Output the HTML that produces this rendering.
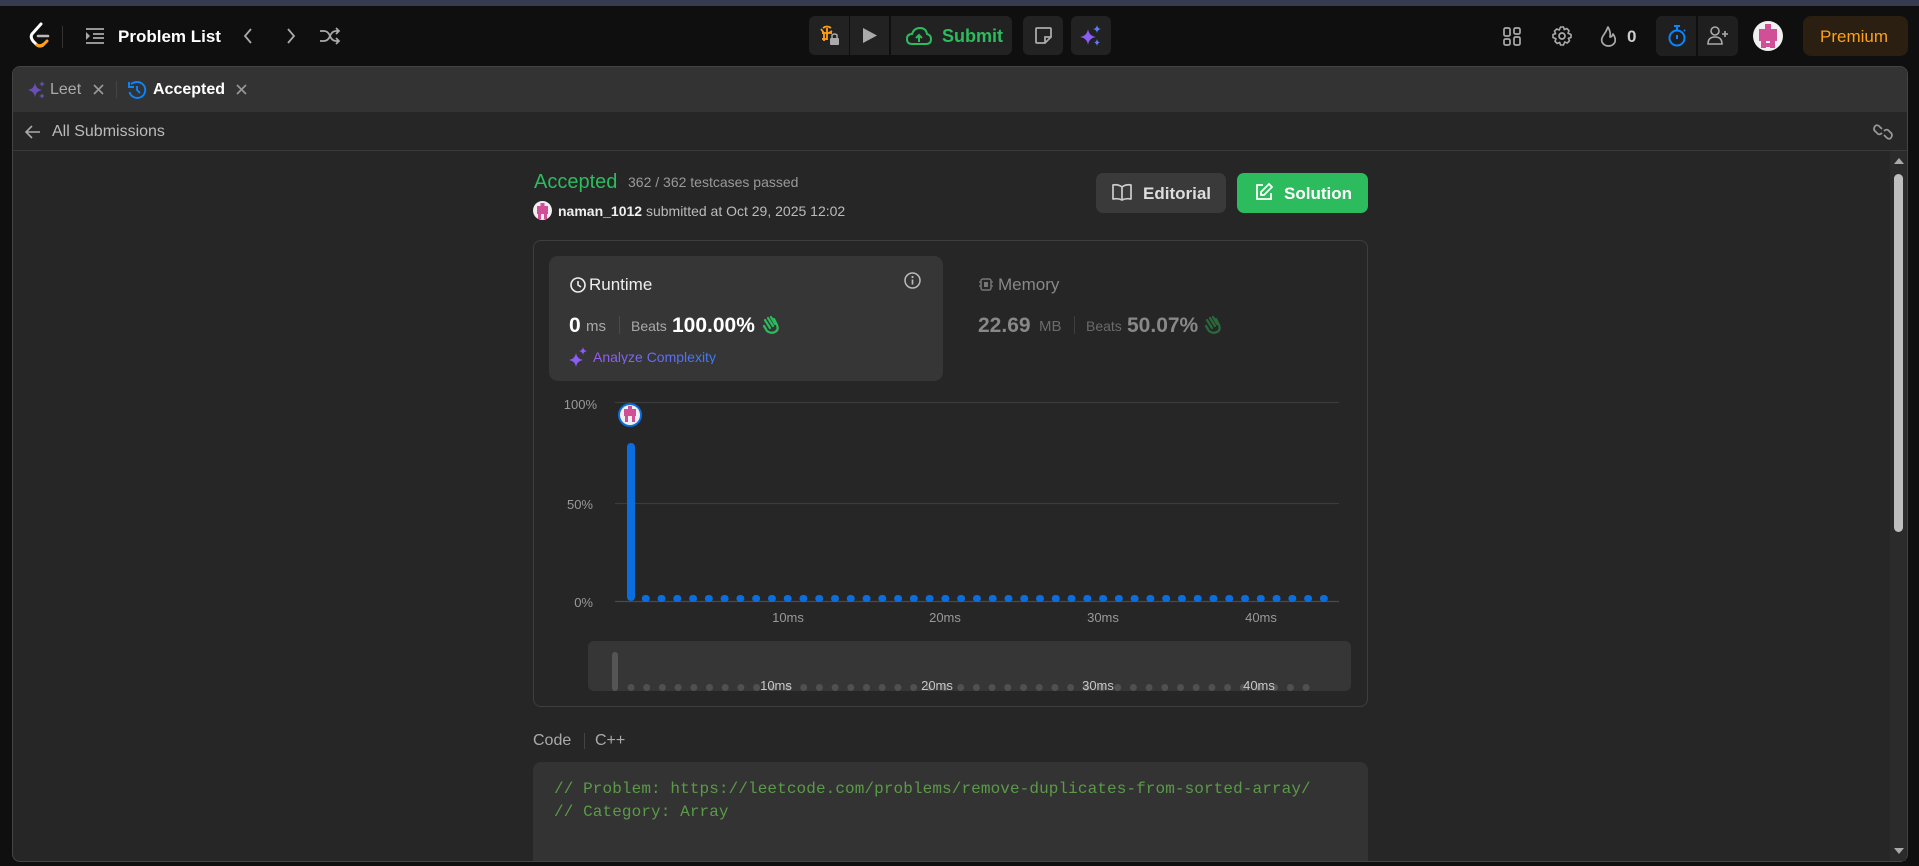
<!DOCTYPE html>
<html><head><meta charset="utf-8"><style>
*{margin:0;padding:0;box-sizing:border-box}
body{width:1919px;height:866px;background:#0f0f0f;font-family:"Liberation Sans",sans-serif;position:relative;overflow:hidden;color:#eee}
.a{position:absolute}
.btn{position:absolute;background:#222;border-radius:6px}
svg{position:absolute;overflow:visible}
.t{position:absolute;white-space:nowrap;line-height:1}
</style></head><body>
<div class="a" style="left:0;top:0;width:1919px;height:6px;background:#373b51"></div>

<svg style="left:29px;top:22px" width="22" height="26" viewBox="0 0 22 26"><path d="M12 2 L3 12 Q1 15 4 19 L8 23 Q11 25 14 23" fill="none" stroke="#fff" stroke-width="3" stroke-linecap="round"/><path d="M8 23 Q11 25 15 22 L18 19" fill="none" stroke="#ffa116" stroke-width="3" stroke-linecap="round"/><path d="M9 14 H19" stroke="#bbb" stroke-width="2.6" stroke-linecap="round"/></svg>
<div class="a" style="left:62px;top:26px;width:1px;height:22px;background:#333"></div>
<svg style="left:86px;top:28px" width="18" height="16"><path d="M0 1H18M7 6H18M7 10H18M0 15H18" stroke="#aaa" stroke-width="1.8"/><path d="M0 4L4 8L0 12Z" fill="#aaa"/></svg>
<div class="t" style="left:118px;top:28px;font-size:17px;font-weight:bold;color:#fff">Problem List</div>
<svg style="left:243px;top:28px" width="10" height="16"><path d="M8 1L2 8L8 15" fill="none" stroke="#aaa" stroke-width="1.8"/></svg>
<svg style="left:286px;top:28px" width="10" height="16"><path d="M2 1L8 8L2 15" fill="none" stroke="#aaa" stroke-width="1.8"/></svg>
<svg style="left:320px;top:28px" width="20" height="16"><path d="M0 3H4Q8 3 10 8Q12 13 16 13H19M0 13H4Q8 13 10 8Q12 3 16 3H19M16 0L19 3L16 6M16 10L19 13L16 16" fill="none" stroke="#aaa" stroke-width="1.7"/></svg>

<div class="btn" style="left:809px;top:16px;width:40px;height:39px;border-radius:6px 0 0 6px"></div>
<svg style="left:819px;top:25px" width="22" height="22"><path d="M4 3Q8 0 12 3M3 8H13M3 14H8M2 4L5 8L5 16M13 6L10 8M8 3V15" fill="none" stroke="#ffa116" stroke-width="1.8"/><rect x="11" y="13" width="9" height="7" rx="1" fill="#aaa"/><path d="M13 13V10Q15.5 8 18 10V13" fill="none" stroke="#aaa" stroke-width="1.5"/></svg>
<div class="btn" style="left:850px;top:16px;width:39px;height:39px;border-radius:0"></div>
<svg style="left:862px;top:27px" width="16" height="17"><path d="M1 1L15 8.5L1 16Z" fill="#aaa"/></svg>
<div class="btn" style="left:891px;top:16px;width:121px;height:39px;border-radius:0 6px 6px 0"></div>
<svg style="left:906px;top:26px" width="26" height="20"><path d="M6 18Q1 18 1 13Q1 8 6 8Q8 2 14 2Q20 2 21 8Q25 9 25 13Q25 18 20 18Z" fill="none" stroke="#2cbb5d" stroke-width="2"/><path d="M13 16V9M10 12L13 9L16 12" fill="none" stroke="#2cbb5d" stroke-width="2"/></svg>
<div class="t" style="left:942px;top:27px;font-size:18px;font-weight:bold;color:#2cbb5d">Submit</div>
<div class="btn" style="left:1023px;top:16px;width:40px;height:39px"></div>
<svg style="left:1035px;top:27px" width="17" height="17"><path d="M2 1H15Q16 1 16 2V10L10 16H2Q1 16 1 15V2Q1 1 2 1ZM16 10H10V16" fill="none" stroke="#aaa" stroke-width="1.8"/></svg>
<div class="btn" style="left:1071px;top:16px;width:40px;height:39px"></div>
<svg style="left:1080px;top:25px" width="22" height="22"><path d="M8 4Q9 11 16 12Q9 13 8 20Q7 13 0 12Q7 11 8 4Z" fill="#8b5cf6"/><path d="M17 0Q17.5 3.5 21 4Q17.5 4.5 17 8Q16.5 4.5 13 4Q16.5 3.5 17 0Z" fill="#5b7cf6"/><path d="M17 14Q17.5 17 20 17.5Q17.5 18 17 21Q16.5 18 14 17.5Q16.5 17 17 14Z" fill="#5b7cf6"/></svg>

<svg style="left:1503px;top:27px" width="19" height="19"><g fill="none" stroke="#aaa" stroke-width="1.7"><rect x="1" y="1" width="6" height="8" rx="1.5"/><rect x="1" y="12" width="6" height="6" rx="1.5"/><rect x="11" y="1" width="6" height="6" rx="1.5"/><rect x="11" y="10" width="6" height="8" rx="1.5"/></g></svg>
<svg style="left:1552px;top:26px" width="20" height="20"><circle cx="10" cy="10" r="3" fill="none" stroke="#aaa" stroke-width="1.7"/><path d="M8.5 1H11.5L12.3 3.6L14.8 2.5L17 4.7L16 7.3L19 8.5V11.5L16.4 12.3L17.5 14.8L15.3 17L12.7 16L11.5 19H8.5L7.7 16.4L5.2 17.5L3 15.3L4 12.7L1 11.5V8.5L3.6 7.7L2.5 5.2L4.7 3L7.3 4Z" fill="none" stroke="#aaa" stroke-width="1.6" stroke-linejoin="round"/></svg>
<svg style="left:1600px;top:26px" width="17" height="21"><path d="M8 1Q6 6 3 10Q1 13 2 16Q4 20 8.5 20Q13 20 15 16Q16 12 13 8Q12 11 10 11Q11 6 8 1Z" fill="none" stroke="#aaa" stroke-width="1.7" stroke-linejoin="round"/></svg>
<div class="t" style="left:1627px;top:28px;font-size:17px;font-weight:bold;color:#ccc">0</div>
<div class="btn" style="left:1656px;top:16px;width:40px;height:40px;border-radius:6px 0 0 6px;background:#1f1f1f"></div>
<div class="btn" style="left:1698px;top:16px;width:40px;height:40px;border-radius:0 6px 6px 0;background:#1f1f1f"></div>
<svg style="left:1667px;top:25px" width="20" height="22"><circle cx="10" cy="13" r="7.5" fill="none" stroke="#0a84ff" stroke-width="2"/><path d="M7 1H13M10 1V5M10 10V14M17 5L18 6" stroke="#0a84ff" stroke-width="2"/></svg>
<svg style="left:1707px;top:26px" width="22" height="19"><circle cx="8" cy="5" r="4" fill="none" stroke="#aaa" stroke-width="1.6"/><path d="M1 18Q1 11 8 11Q15 11 15 18Z" fill="none" stroke="#aaa" stroke-width="1.6"/><path d="M18 5V11M15 8H21" stroke="#aaa" stroke-width="1.6"/></svg>
<svg style="left:1753px;top:21px" width="30" height="30"><circle cx="15" cy="15" r="15" fill="#f0f0f0"/><rect x="12" y="3" width="6" height="5" fill="#d14f96"/><rect x="6" y="8" width="18" height="12" fill="#d14f96"/><rect x="8" y="20" width="5" height="7" fill="#d14f96"/><rect x="17" y="20" width="5" height="7" fill="#d14f96"/><rect x="13" y="22" width="4" height="4" fill="#d14f96"/></svg>
<div class="btn" style="left:1803px;top:16px;width:105px;height:40px;background:#2a1f10;border-radius:8px"></div>
<div class="t" style="left:1820px;top:28px;font-size:17px;color:#ffa116">Premium</div>

<div class="a" style="left:12px;top:66px;width:1896px;height:796px;background:#262626;border:1px solid #444;border-radius:8px;overflow:hidden">
  <div class="a" style="left:0;top:0;width:1896px;height:45px;background:#333"></div>
  <div class="a" style="left:0;top:83px;width:1896px;height:1px;background:#3a3a3a"></div>
</div>
<svg style="left:28px;top:81px" width="18" height="18"><path d="M7 2Q8 8 14 9Q8 10 7 16Q6 10 0 9Q6 8 7 2Z" fill="#6b4fb8"/><path d="M14 0Q14.4 2.6 17 3Q14.4 3.4 14 6Q13.6 3.4 11 3Q13.6 2.6 14 0Z M14 12Q14.4 14.6 17 15Q14.4 15.4 14 18Q13.6 15.4 11 15Q13.6 14.6 14 12Z" fill="#5a55b0"/></svg>
<div class="t" style="left:50px;top:82px;font-size:16px;color:#aaa">Leet</div>
<svg style="left:93px;top:84px" width="11" height="11"><path d="M1 1L10 10M10 1L1 10" stroke="#999" stroke-width="1.6"/></svg>
<div class="a" style="left:116px;top:81px;width:1px;height:17px;background:#444"></div>
<svg style="left:128px;top:81px" width="18" height="18"><path d="M3 3Q6 1 9 1A8 8 0 1 1 1.5 11" fill="none" stroke="#0a84ff" stroke-width="1.9"/><path d="M1 1V6H6" fill="none" stroke="#0a84ff" stroke-width="1.9"/><path d="M9 5V9L12 12" fill="none" stroke="#0a84ff" stroke-width="1.9"/></svg>
<div class="t" style="left:153px;top:82px;font-size:16px;font-weight:bold;color:#fff">Accepted</div>
<svg style="left:236px;top:84px" width="11" height="11"><path d="M1 1L10 10M10 1L1 10" stroke="#999" stroke-width="1.6"/></svg>
<svg style="left:25px;top:125px" width="16" height="14"><path d="M15 7H1M7 1L1 7L7 13" fill="none" stroke="#aaa" stroke-width="1.6"/></svg>
<div class="t" style="left:52px;top:124px;font-size:16px;color:#bbb">All Submissions</div>
<svg style="left:1873px;top:123px" width="20" height="18"><g fill="none" stroke="#999" stroke-width="1.7"><path d="M9 6L6 3Q3 1 1.5 4Q0 7 3 9L5 11Q7 12 9 10"/><path d="M11 12L14 15Q17 17 18.5 14Q20 11 17 9L15 7Q13 6 11 8"/></g></svg>

<div class="a" style="left:1890px;top:151px;width:16px;height:710px;background:#2b2b2b"></div>
<div class="a" style="left:1894px;top:174px;width:9px;height:358px;background:#bfbfbf;border-radius:5px"></div>
<svg style="left:1894px;top:157px" width="10" height="8"><path d="M0 7L5 1L10 7Z" fill="#aaa"/></svg>
<svg style="left:1894px;top:847px" width="10" height="8"><path d="M0 1L5 7L10 1Z" fill="#aaa"/></svg>

<div class="t" style="left:534px;top:172px;font-size:20px;color:#2cbb5d">Accepted</div>
<div class="t" style="left:628px;top:175px;font-size:14px;color:#999">362 / 362 testcases passed</div>
<svg style="left:533px;top:201px" width="19" height="19"><circle cx="9.5" cy="9.5" r="9.5" fill="#f0f0f0"/><rect x="7.5" y="2" width="4" height="3" fill="#d14f96"/><rect x="4" y="5" width="11" height="8" fill="#d14f96"/><rect x="5" y="13" width="3" height="5" fill="#d14f96"/><rect x="11" y="13" width="3" height="5" fill="#d14f96"/></svg>
<div class="t" style="left:558px;top:204px;font-size:14px;color:#ddd"><b style="color:#eee">naman_1012</b> <span style="color:#bbb">submitted at Oct 29, 2025 12:02</span></div>
<div class="btn" style="left:1096px;top:173px;width:130px;height:40px;background:#3a3a3a;border-radius:7px"></div>
<svg style="left:1112px;top:184px" width="20" height="17"><path d="M10 3Q6 0 1 1V15Q6 14 10 16Q14 14 19 15V1Q14 0 10 3ZM10 3V16" fill="none" stroke="#ccc" stroke-width="1.7" stroke-linejoin="round"/></svg>
<div class="t" style="left:1143px;top:185px;font-size:17px;font-weight:bold;color:#ddd">Editorial</div>
<div class="btn" style="left:1237px;top:173px;width:131px;height:40px;background:#2cbb5d;border-radius:7px"></div>
<svg style="left:1255px;top:183px" width="18" height="18"><path d="M8 2H2V16H16V10" fill="none" stroke="#fff" stroke-width="1.8"/><path d="M14 1L17 4L9 12H6V9Z" fill="none" stroke="#fff" stroke-width="1.8" stroke-linejoin="round"/></svg>
<div class="t" style="left:1284px;top:185px;font-size:17px;font-weight:bold;color:#fff">Solution</div>

<div class="a" style="left:533px;top:240px;width:835px;height:467px;border:1px solid #3e3e3e;border-radius:8px"></div>
<div class="a" style="left:549px;top:256px;width:394px;height:125px;background:#363636;border-radius:9px"></div>
<svg style="left:570px;top:277px" width="16" height="16"><circle cx="8" cy="8" r="7" fill="none" stroke="#eee" stroke-width="1.6"/><path d="M8 4V8L11 10" fill="none" stroke="#eee" stroke-width="1.6"/></svg>
<div class="t" style="left:589px;top:276px;font-size:17px;color:#eee">Runtime</div>
<svg style="left:904px;top:272px" width="17" height="17"><circle cx="8.5" cy="8.5" r="7.5" fill="none" stroke="#bbb" stroke-width="1.5"/><path d="M8.5 7.5V12.5" stroke="#bbb" stroke-width="1.7"/><circle cx="8.5" cy="5" r="1.1" fill="#bbb"/></svg>
<div class="t" style="left:569px;top:315px;font-size:21px;font-weight:bold;color:#fff">0</div>
<div class="t" style="left:586px;top:319px;font-size:15px;color:#aaa">ms</div>
<div class="a" style="left:619px;top:316px;width:1px;height:18px;background:#4a4a4a"></div>
<div class="t" style="left:631px;top:319px;font-size:14px;color:#aaa">Beats</div>
<div class="t" style="left:672px;top:315px;font-size:21px;font-weight:bold;color:#fff">100.00%</div>
<svg style="left:761px;top:314px" width="20" height="20"><path d="M4 6L9 14M7 4L12 12M10 3L14 10M13 5L16 11Q18 16 14 18Q10 20 6 17L3 12" fill="none" stroke="#2cbb5d" stroke-width="2.2" stroke-linecap="round"/></svg>
<svg style="left:569px;top:347px" width="18" height="20"><path d="M7 6Q8 12 14 13Q8 14 7 20Q6 14 0 13Q6 12 7 6Z" fill="#8b5cf6"/><path d="M14 0Q14.5 3.5 18 4Q14.5 4.5 14 8Q13.5 4.5 10 4Q13.5 3.5 14 0Z" fill="#8b5cf6"/></svg>
<div class="t" style="left:593px;top:350px;font-size:14px;background:linear-gradient(90deg,#9a5cf0,#3a7cf6);-webkit-background-clip:text;color:transparent">Analyze Complexity</div>

<svg style="left:979px;top:277px" width="14" height="15"><rect x="2" y="2" width="10" height="11" rx="2" fill="none" stroke="#777" stroke-width="1.5"/><rect x="5" y="5" width="4" height="5" fill="#777"/><path d="M0 5H2M0 9H2M12 5H14M12 9H14" stroke="#777" stroke-width="1.2"/></svg>
<div class="t" style="left:998px;top:276px;font-size:17px;color:#888">Memory</div>
<div class="t" style="left:978px;top:315px;font-size:21px;font-weight:bold;color:#888">22.69</div>
<div class="t" style="left:1039px;top:319px;font-size:15px;color:#6a6a6a">MB</div>
<div class="a" style="left:1074px;top:316px;width:1px;height:18px;background:#3e3e3e"></div>
<div class="t" style="left:1086px;top:319px;font-size:14px;color:#6a6a6a">Beats</div>
<div class="t" style="left:1127px;top:315px;font-size:21px;font-weight:bold;color:#888">50.07%</div>
<svg style="left:1203px;top:314px" width="20" height="20"><path d="M4 6L9 14M7 4L12 12M10 3L14 10M13 5L16 11Q18 16 14 18Q10 20 6 17L3 12" fill="none" stroke="#2a6a3a" stroke-width="2.2" stroke-linecap="round"/></svg>

<svg style="left:0;top:0" width="1919" height="866">
<g font-family="Liberation Sans" font-size="13" fill="#999">
<text x="597" y="409" text-anchor="end">100%</text>
<text x="593" y="509" text-anchor="end">50%</text>
<text x="593" y="607" text-anchor="end">0%</text>
</g>
<path d="M615 402.5H1339M615 503.5H1339" stroke="#3c3c3c" stroke-width="1.2"/>
<path d="M615 601.5H1339" stroke="#4a4a4a" stroke-width="1.2"/>
<rect x="627" y="443" width="8" height="158" rx="4" fill="#0a6de0"/>
<g fill="#0a6de0" id="bars"></g>
<g font-family="Liberation Sans" font-size="13" fill="#999" text-anchor="middle">
<text x="788" y="622">10ms</text><text x="945" y="622">20ms</text><text x="1103" y="622">30ms</text><text x="1261" y="622">40ms</text>
</g>
<rect x="588" y="641" width="763" height="50" rx="6" fill="#363636"/>
<rect x="612" y="652" width="6" height="39" rx="3" fill="#555"/>
<g fill="#505050" id="mbars"></g>
<g font-family="Liberation Sans" font-size="13" fill="#c8c8c8" text-anchor="middle">
<text x="776" y="690">10ms</text><text x="937" y="690">20ms</text><text x="1098" y="690">30ms</text><text x="1259" y="690">40ms</text>
</g>
<circle cx="630" cy="415" r="12" fill="#0a6de0"/>
<circle cx="630" cy="415" r="10" fill="#f0f0f0"/>
<rect x="628" y="406" width="4" height="3" fill="#d14f96"/><rect x="624" y="409" width="12" height="7" fill="#d14f96"/><rect x="625" y="416" width="3" height="6" fill="#d14f96"/><rect x="632" y="416" width="3" height="6" fill="#d14f96"/>
</svg>
<script>
var b='',m='';
for(var i=1;i<=44;i++){var x=630+15.77*i;b+='<rect x="'+(x-4)+'" y="595" width="8" height="7" rx="3.5"/>';}
for(var j=0;j<44;j++){var x2=631+15.7*j;m+='<rect x="'+(x2-3.5)+'" y="684" width="7" height="7" rx="3.5"/>';}
document.getElementById('bars').innerHTML=b;document.getElementById('mbars').innerHTML=m;
</script>

<div class="t" style="left:533px;top:733px;font-size:16px;color:#aaa">Code</div>
<div class="a" style="left:584px;top:733px;width:1px;height:16px;background:#444"></div>
<div class="t" style="left:595px;top:733px;font-size:16px;color:#aaa">C++</div>
<div class="a" style="left:533px;top:762px;width:835px;height:99px;background:#333;border-radius:8px 8px 0 0"></div>
<div class="t" style="left:554px;top:781px;font-family:'Liberation Mono',monospace;font-size:16px;letter-spacing:0.1px;color:#5b9a48">// Problem: https://leetcode.com/problems/remove-duplicates-from-sorted-array/</div>
<div class="t" style="left:554px;top:804px;font-family:'Liberation Mono',monospace;font-size:16px;letter-spacing:0.1px;color:#5b9a48">// Category: Array</div>
</body></html>
